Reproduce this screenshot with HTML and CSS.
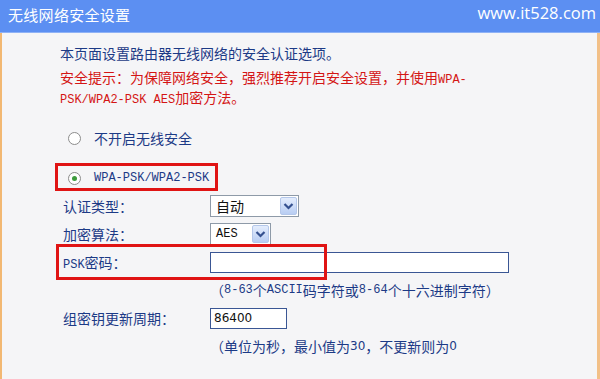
FILE: index.html
```html
<!DOCTYPE html>
<html lang="zh-CN">
<head>
<meta charset="utf-8">
<title>无线网络安全设置</title>
<link rel="stylesheet" href="styles.css">
</head>
<body>
<div class="page">
  <div class="header">
    <span class="title">无线网络安全设置</span>
    <span class="site">www.it528.com</span>
  </div>
  <div class="main">
    <p class="intro">本页面设置路由器无线网络的安全认证选项。</p>
    <p class="warn"><span class="line">安全提示：为保障网络安全，强烈推荐开启安全设置，并使用<span class="mono">WPA-</span></span><span class="line"><span class="mono">PSK/WPA2-PSK AES</span>加密方法。</span></p>
    <div class="radio-row"><span class="radio"></span><span>不开启无线安全</span></div>
    <div class="radio-row second"><span class="radio checked"></span><span class="mono">WPA-PSK/WPA2-PSK</span></div>
    <div class="form">
      <div class="label">认证类型：</div>
      <div class="ctl"><div class="select wide"><span class="val">自动</span><span class="btn"><svg width="11" height="8" viewBox="0 0 11 8"><path d="M1.5 2 L5.5 6 L9.5 2" fill="none" stroke="#34508f" stroke-width="2.2"/></svg></span></div></div>
      <div class="label">加密算法：</div>
      <div class="ctl"><div class="select narrow"><span class="val mono">AES</span><span class="btn"><svg width="11" height="8" viewBox="0 0 11 8"><path d="M1.5 2 L5.5 6 L9.5 2" fill="none" stroke="#34508f" stroke-width="2.2"/></svg></span></div></div>
      <div class="label"><span class="mono">PSK</span>密码：</div>
      <div class="ctl"><div class="input long"></div></div>
      <div class="label"></div>
      <div class="ctl hint">（<span class="mono">8-63</span>个<span class="mono">ASCII</span>码字符或<span class="mono">8-64</span>个十六进制字符）</div>
      <div class="label">组密钥更新周期：</div>
      <div class="ctl"><div class="input short">86400</div></div>
      <div class="label"></div>
      <div class="ctl hint">（单位为秒，最小值为<span class="num">30</span>，不更新则为<span class="num">0</span></div>
    </div>
  </div>
  <div class="mark mark-radio"></div>
  <div class="mark mark-psk"></div>
</div>
</body>
</html>
```
FILE: styles.css
```css
* { box-sizing: border-box; }
html, body { margin: 0; padding: 0; }
body {
  background: #f5f5f7;
  font-family: "Noto Sans CJK SC", "Noto Sans", sans-serif;
  font-size: 14px;
  color: #1c3a86;
}
.page {
  position: relative;
  width: 600px;
  height: 379px;
  overflow: hidden;
}
.header {
  height: 33px;
  background: #5c8ff2;
  border-bottom: 1px solid #8fb2f6;
  display: flex;
  align-items: center;
  justify-content: space-between;
  padding: 0 4px 2px 8px;
}
.title {
  color: #ffffff;
  font-size: 15px;
  line-height: 20px;
  letter-spacing: 0.3px;
}
.site {
  color: #ffffff;
  font-family: "Open Sans", sans-serif;
  font-size: 16.5px;
  line-height: 20px;
  margin-top: -4px;
}
.main {
  height: 346px;
  border-left: 2px solid #f2b873;
  border-right: 3px solid #f2c088;
  padding-top: 10px;
}
.intro {
  margin: 0 0 4px 58px;
  height: 20px;
  line-height: 20px;
  color: #1c3a86;
}
.warn {
  margin: 0 0 0 58px;
  color: #d41515;
}
.warn .line {
  display: block;
  height: 20px;
  line-height: 20px;
  white-space: nowrap;
}
.warn .line + .line { height: 19px; }
.mono {
  font-family: "Liberation Mono", monospace;
  font-size: 12px;
  line-height: 1;
}
.radio-row {
  display: flex;
  align-items: center;
  height: 20px;
  margin: 22px 0 0 66px;
  gap: 13px;
  color: #1c3a86;
  line-height: 20px;
}
.radio-row.second { margin-top: 20px; }
.radio {
  width: 13px;
  height: 13px;
  border: 1px solid #8c8c8c;
  border-radius: 50%;
  background: #ffffff;
  display: flex;
  align-items: center;
  justify-content: center;
}
.radio.checked::after {
  content: "";
  width: 5px;
  height: 5px;
  border-radius: 50%;
  background: #3d9b3d;
}
.form {
  display: grid;
  grid-template-columns: 147px 1fr;
  grid-auto-rows: 28px;
  align-items: center;
  margin: 4px 0 0 61px;
}
.label { line-height: 20px; height: 20px; }
.ctl { display: flex; align-items: center; }
.select {
  height: 22px;
  border: 1px solid #8e9aa8;
  background: #ffffff;
  display: flex;
  align-items: center;
  justify-content: space-between;
  padding: 1px;
  color: #111;
}
.select.wide { width: 89px; }
.select.narrow { width: 61px; }
.select .val { padding-left: 4px; line-height: 18px; }
.select .btn {
  width: 17px;
  height: 18px;
  background: linear-gradient(#e4edfd, #b8cdf3);
  border: 1px solid #b4c7ea;
  border-radius: 2px;
  display: flex;
  align-items: center;
  justify-content: center;
}
.input {
  height: 21px;
  border: 1px solid #3a5694;
  background: #ffffff;
  color: #111;
  font-family: "DejaVu Sans", sans-serif;
  font-size: 12px;
  line-height: 19px;
  padding-left: 3px;
}
.input.long { width: 299px; }
.input.short { width: 77px; }
.hint { line-height: 20px; height: 20px; color: #1c3a86; white-space: nowrap; }
.num { font-family: "DejaVu Sans", sans-serif; font-size: 12px; line-height: 1; }
.mark {
  position: absolute;
  border: 3px solid #e01414;
}
.mark-radio { left: 55px; top: 163px; width: 163px; height: 28px; }
.mark-psk { left: 56px; top: 244px; width: 271px; height: 36px; }
```
